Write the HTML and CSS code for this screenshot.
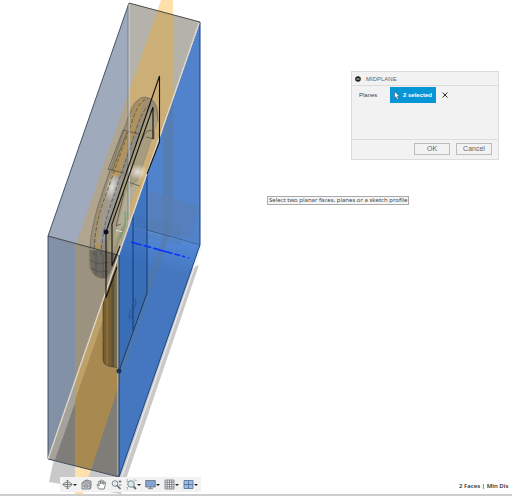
FILE: index.html
```html
<!DOCTYPE html>
<html lang="en">
<head>
<meta charset="utf-8">
<meta name="viewport" content="width=device-width, initial-scale=1">
<title>Midplane</title>
<link rel="stylesheet" href="styles.css">
</head>
<body>
<main class="viewport">
  <svg class="model" viewBox="0 0 512 494" width="512" height="494" role="img" aria-label="Model with a construction plane between two selected faces">
    <defs>
      <linearGradient id="tube" x1="0" x2="1" y1="0" y2="0"><stop offset="0" stop-color="#6a542c"/><stop offset=".35" stop-color="#957339"/><stop offset=".55" stop-color="#615638"/><stop offset="1" stop-color="#8c7d5b"/></linearGradient>
      <linearGradient id="haze" gradientUnits="userSpaceOnUse" x1="160" x2="153" y1="236" y2="268"><stop offset="0" stop-color="#5488d6"/><stop offset="1" stop-color="#4477c0"/></linearGradient>
      <radialGradient id="shine"><stop offset="0" stop-color="#fff" stop-opacity=".7"/><stop offset="1" stop-color="#fff" stop-opacity="0"/></radialGradient>
      <clipPath id="solid"><path d="M129 3 200 22V245L119 477 48 459V236Z"/></clipPath>
      <clipPath id="front"><path d="M200 22V245L119 477V255Z"/></clipPath>
      <filter id="soft"><feGaussianBlur stdDeviation=".6"/></filter>
    </defs>
    <path d="M192 268 199 265 121 494 49 482 54 459 119 477Z" fill="#c9c9c9" filter="url(#soft)"/>
    <path d="M161 0H173V223L83 494H75V247Z" fill="#ffdfaa"/>
    <path d="M129 3 200 22 129 226Z" fill="#b5b2ac"/>
    <path d="M129 3V226L119 255 48 236Z" fill="#9faabc"/>
    <path d="M48 236 119 255 48 459Z" fill="#8391a6"/>
    <path d="M119 255V477L48 459Z" fill="#807d79"/>
    <path d="M119 255V277L55 460 48 459Z" fill="#a5a29c"/>
    <g clip-path="url(#solid)">
      <path d="M161 0H173V99L129 226V92Z" fill="#ccae77"/>
      <path d="M129 92V226L119 255 75 243V247Z" fill="#b1a58f"/>
      <path d="M75 243 119 255 75 381Z" fill="#9b937f"/>
      <path d="M119 255V385L83 494H75V381Z" fill="#a88950"/>
      <path d="M119 255V274L75 400V381Z" fill="#bda16a"/>
    </g>
    <path d="M110 282 119 257V367Q112 368 106 365 103 364 103 360V300Z" fill="url(#tube)"/>
    <path d="M103 300V360Q103 364 108 366L119 368M109 285V366M113 275V367" fill="none" stroke="#45402f" stroke-width=".6"/>
    <g>
      <path d="M89 270Q87 235 101 194L128 117Q136 97 145 97 160 98 158 121L134 192 118 246 107 278Q94 282 89 270Z" fill="#9b8f78"/>
      <path d="M94 270Q91 237 107 197L132 124Q140 103 148 101L137 138 114 204Q103 238 101 278Z" fill="#8f8d89"/>
      <path d="M105 192 129 124Q138 97 144 98L139 118 112 199Q104 226 100 250H95Q96 216 105 192Z" fill="#b09460"/>
      <path d="M104 196 111 177 124 176 116 204 107 240 96 244Z" fill="#9a9898" opacity=".8"/>
      <path d="M119 198 145 116Q156 106 158 120L132 194 121 232 109 263Q107 240 119 198Z" fill="#a79c7d"/>
      <path d="M128 139 130 108Q139 94 150 99L132 144Z" fill="#ac8f5d" opacity=".6"/>
      <path d="M126 193 139 179 124 224 114 240Z" fill="#b2ad98"/>
      <path d="M90 250Q90 268 92 272 97 280 107 278L119 255 98 250Z" fill="#4f4c49" opacity=".55"/>
      <ellipse cx="112" cy="187" rx="6" ry="15" transform="rotate(15 112 187)" fill="url(#shine)"/>
      <ellipse cx="138" cy="172" rx="10" ry="8" fill="url(#shine)"/>
      <path d="M90 267Q87 237 102 194L128 118Q136 96 145 97 158 98 158 121" fill="none" stroke="#736b5b" stroke-width=".7"/>
      <path d="M94 255Q94 226 105 197L134 116Q140 99 148 99M101 255Q102 229 112 201L137 127Q145 103 153 105" fill="none" stroke="#4e493f" stroke-width=".7" stroke-dasharray="4 2"/>
      <path d="M108 170 123 130 139 134M108 169 124 173M112 171 127 132M90 260 99 264 109 262M90 268 100 272 108 271M96 252V275M103 254V278M142 140Q147 126 154 132V139L146 137M128 182 140 186M124 193 116 226 121 224M117 230 123 233" fill="none" stroke="#504d42" stroke-width=".7"/>
      <path d="M125 211V226L120 239" fill="none" stroke="#43a857" stroke-width=".8"/>
      <path d="M116 230 122 232" stroke="#e4e7e6" stroke-width="1.2"/>
    </g>
    <g clip-path="url(#front)">
      <path d="M200 22V245L127 226Z" fill="#5183cc"/>
      <path d="M127 226 200 245 119 477V255Z" fill="url(#haze)"/>
      <path d="M163 90H173V223L119 386V362L163 238Z" fill="#58789f" opacity=".55"/>
      <path d="M147 190 198 206 193 238 147 230Z" fill="#5a7eb3" opacity=".6"/>
      <path d="M135 215 181 227V245L135 236Z" fill="#55799f" opacity=".25"/>
      <path d="M160 140 147 174V293L119 371V255Z" fill="#245faa" opacity=".38"/>
      <path d="M147 230 200 245" stroke="#315987" stroke-width=".8"/>
      <path d="M147 174V293L119 371M133 212V331" fill="none" stroke="#133b76" stroke-width="1"/>
      <ellipse cx="134" cy="304" rx="1.5" ry="5" transform="rotate(12 134 304)" fill="none" stroke="#26518c" stroke-width=".8"/>
      <ellipse cx="131" cy="314" rx="1.5" ry="5" transform="rotate(12 131 314)" fill="none" stroke="#26518c" stroke-width=".8"/>
    </g>
    <path d="M129 3 48 236V459L119 477" fill="none" stroke="#36465b" stroke-width=".9"/>
    <path d="M129 3 200 22M48 236 118 255" fill="none" stroke="#3a3a38" stroke-width=".9"/>
    <path d="M119 477 200 245V22" fill="none" stroke="#143f83" stroke-width="1"/>
    <path d="M201 248 121 479" stroke="#f4f2ee" stroke-width="1"/>
    <path d="M129 4V226" stroke="#dcd8cf"/>
    <path d="M128 5V220" stroke="#566477" stroke-width=".6"/>
    <path d="M199 23 48 459" stroke="#e3d8c7" stroke-width="1.3"/>
    <path d="M118 257V475" stroke="#d9cebc"/>
    <path d="M119 255V476" stroke="#153f78" stroke-width="1"/>
    <path d="M106 232 159.500 76V142L147 174M153 107 112 224V266M153 107V139M112 266 120 246M106 298 117 267M106 232V298" fill="none" stroke="#11130f" stroke-width="1.1"/>
    <path d="M131 242 189 258" stroke="#0834fa" stroke-width="1.6" stroke-dasharray="11 2 8 2 20 2 6 2 3 3"/>
    <circle cx="106" cy="232" r="2.5" fill="#0b1021"/>
    <circle cx="119" cy="371" r="2.5" fill="#143762"/>
  </svg>

  <form class="dialog" aria-labelledby="dialog-title">
    <header class="dialog-header">
      <svg class="collapse" viewBox="0 0 6 6" aria-hidden="true"><circle cx="3" cy="3" r="2.8"/><path d="M1.5 3H4.500"/></svg>
      <h1 id="dialog-title">MIDPLANE</h1>
    </header>
    <div class="dialog-body">
      <span class="label" id="planes">Planes</span>
      <button type="button" class="selection" aria-describedby="planes">
        <svg viewBox="0 0 6 9" aria-hidden="true"><path d="M.5.5V7L2 5.7 3.2 8.5 4.5 8 3.4 5.2H5.5Z"/></svg>
        2 selected
      </button>
      <button type="button" class="clear" aria-label="Clear selection"><svg viewBox="0 0 6 6" aria-hidden="true"><path d="M.5.5 5.5 5.5M5.5.5.5 5.5"/></svg></button>
    </div>
    <footer class="dialog-footer">
      <button type="button" class="action">OK</button>
      <button type="button" class="action">Cancel</button>
    </footer>
  </form>

  <div class="hint" role="tooltip">Select two planar faces, planes or a sketch profile</div>

  <nav class="toolbar" aria-label="Navigation">
    <button type="button" class="tool menu" aria-label="Orbit"><svg viewBox="0 0 11 11"><path d="M5.5 1V10M1 5.5H10M4 2.5 5.5 1 7 2.5M4 8.5 5.5 10 7 8.5"/><ellipse cx="5.5" cy="5.5" rx="4.5" ry="2"/></svg></button>
    <button type="button" class="tool" aria-label="Look at"><svg viewBox="0 0 11 11"><path d="M1 4H9V10H1ZM1 4 3 2H10V8L9 10M3 6H7V8H3ZM4 2 6 .8 8 2" fill="#d5d8db"/></svg></button>
    <button type="button" class="tool" aria-label="Pan"><svg viewBox="0 0 11 11"><path d="M3 10 1 6Q1 5 2.2 5.500L3.300 7 2.500 2.500Q3 1.400 3.700 2.300L4.600 5 4.500 1.300Q5.200.5 5.800 1.300L6.200 5 7 1.800Q8 1.300 8 2.200L7.600 5.300 8.800 3.300Q10 3 9.600 4.200L8.200 10Z" fill="#fff"/></svg></button>
    <button type="button" class="tool" aria-label="Zoom"><svg viewBox="0 0 11 11"><circle cx="4" cy="4.5" r="2.8" fill="#e2edf5"/><path d="M6 6.5 9.5 10" stroke-width="1.7"/><path d="M7.5 2.5H10.5M9 1V4M8 6H10.5"/></svg></button>
    <button type="button" class="tool menu" aria-label="Fit"><svg viewBox="0 0 11 11"><path d="M1 3V1H3M8 1H10V3M1 8V10H3" stroke-dasharray="1 1"/><circle cx="5" cy="5" r="3.3" fill="#d7eae8"/><path d="M7.5 7.5 10 10" stroke-width="1.8"/></svg></button>
    <button type="button" class="tool menu" aria-label="Display settings"><svg viewBox="0 0 11 11"><path d="M.7 1.5H10.3V8H.7Z" fill="#82a5d3"/><path d="M5.5 8V9.5M3 9.7H8"/></svg></button>
    <button type="button" class="tool menu" aria-label="Grid and snaps"><svg viewBox="0 0 11 11"><path d="M1 1H10V10H1ZM1 3.2H10M1 5.5H10M1 7.8H10M3.2 1V10M5.5 1V10M7.8 1V10" stroke-width=".7"/></svg></button>
    <button type="button" class="tool menu" aria-label="Viewports"><svg viewBox="0 0 11 11"><path d="M1 1.5H10V9.5H1ZM1 5.5H10M5.5 1.5V9.5" fill="#9bbbe1" stroke="#506b91"/></svg></button>
  </nav>
  <output class="status">2 Faces | Min Dis</output>
</main>
</body>
</html>
```
FILE: styles.css
```css
* { box-sizing: border-box; }

body {
  margin: 0;
  background: #fff;
  font: 6px/8px "Liberation Sans", Arial, sans-serif;
  color: #444;
}

h1 { margin: 0; font: inherit; color: #666; }

button { margin: 0; padding: 0; border: 0; background: none; font: inherit; color: inherit; }

.viewport {
  position: relative;
  height: calc(100vh - 1px);
  min-height: 240px;
  overflow: hidden;
  border-bottom: 2px solid #cecece;
}

.model { display: block; }

.dialog {
  position: absolute;
  top: 71px;
  right: 13px;
  width: 148px;
  border: 1px solid #dcdcdc;
  background: #f2f2f2;
}

.dialog-header {
  display: flex;
  align-items: center;
  gap: 5px;
  height: 14px;
  padding: 0 3px;
  border-bottom: 1px solid #dcdcdc;
}

.collapse { width: 6px; height: 6px; fill: #222; stroke: #ddd; stroke-width: 1; }
.collapse circle { stroke: none; }

.dialog-body {
  display: flex;
  align-items: flex-start;
  height: 53px;
  padding: 1px 7px;
}

.label { width: 31px; line-height: 16px; }

.selection {
  display: flex;
  align-items: center;
  justify-content: center;
  gap: 3px;
  width: 46px;
  height: 16px;
  background: #0696d7;
  color: #fff;
  font-weight: bold;
}

.selection svg { width: 6px; height: 9px; fill: #fff; stroke: #244d68; stroke-width: .5; }

.clear { height: 16px; margin-left: 6px; }
.clear svg { display: block; width: 6px; height: 6px; fill: none; stroke: #333; }

.dialog-footer {
  display: flex;
  justify-content: flex-end;
  gap: 6px;
  padding: 3px 6px 4px;
  border-top: 1px solid #dcdcdc;
}

.action {
  width: 36px;
  height: 12px;
  border: 1px solid #bcbcbc;
  font-size: 7px;
  line-height: 10px;
  color: #666;
}

.hint {
  position: absolute;
  top: 196px;
  left: 267px;
  padding: 0 1px;
  border: 1px solid #aaa;
  background: #f5f5f6;
  font: 6px/7px "Noto Sans", sans-serif;
  white-space: nowrap;
}

.toolbar {
  position: absolute;
  bottom: 2px;
  left: 60px;
  display: flex;
  align-items: center;
  gap: 4px;
  height: 15px;
  padding: 0 3px 0 2px;
  background: #f2f2f2;
}

.tool { display: flex; align-items: center; }
.tool svg { width: 11px; height: 11px; fill: none; stroke: #666c71; stroke-width: .8; }
.tool.menu::after { content: ""; border: 2px solid transparent; border-top-color: #222; border-bottom: 0; }

.status {
  position: absolute;
  bottom: 4px;
  left: 459px;
  font: 600 6px/8px "Noto Sans", sans-serif;
  white-space: nowrap;
  color: #333;
}
```
